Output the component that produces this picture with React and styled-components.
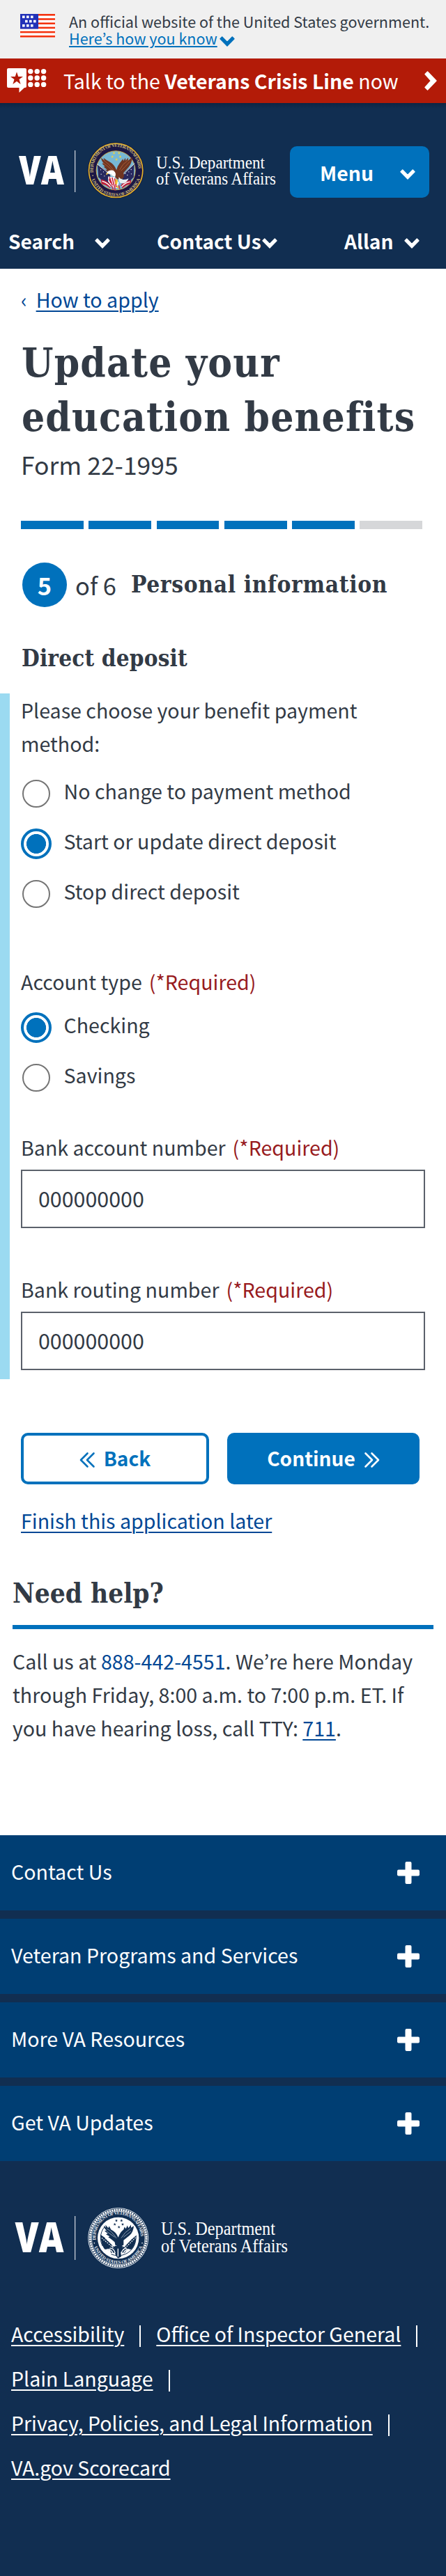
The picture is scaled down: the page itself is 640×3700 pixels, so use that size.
import React, { useState } from "react";
import styled, { createGlobalStyle, css } from "styled-components";

const color = {
  ink: "#323a45",
  navy: "#112e51",
  footerBlue: "#003e73",
  primary: "#0071bc",
  link: "#004795",
  red: "#b31b08",
  required: "#981b1e",
  hint: "#9bdaf1",
};

const sans = `"Noto Sans CJK KR", "Noto Sans CJK JP", "Noto Sans", sans-serif`;
const slab = `"DejaVu Serif Condensed", "DejaVu Serif", serif`;

const GlobalStyle = createGlobalStyle`
  *, *::before, *::after { box-sizing: border-box; }
  body {
    margin: 0;
    background: #fff;
    color: ${color.ink};
    font-family: ${sans};
    font-size: 28.6px;
    line-height: 48px;
  }
  h1, h2, h3, p, ul, fieldset { margin: 0; padding: 0; border: 0; min-width: 0; }
  button, input { font-family: inherit; color: inherit; }
`;

const Page = styled.div`
  width: 640px;
  height: 3700px;
  overflow: hidden;
  display: flex;
  flex-direction: column;
`;

const underline = css`
  text-decoration: underline;
  text-decoration-thickness: 2px;
  text-underline-offset: 4px;
`;

/* ---------- Icons ---------- */

const Icon = styled.svg`
  display: block;
  flex: none;
  overflow: visible;
`;

const ChevronDown = ({ width = 22, fill = "#fff" }) => (
  <Icon width={width} height={(width * 15) / 22} viewBox="0 0 22 15">
    <path
      d="M1 3.7 3.7 1 11 8.4 18.3 1 21 3.7 11 14Z"
      fill={fill}
      stroke={fill}
      strokeWidth="1.4"
      strokeLinejoin="round"
    />
  </Icon>
);

const ChevronRight = () => (
  <Icon width="18" height="28" viewBox="0 0 18 28">
    <path
      d="M1 4.500 4.500 1 17 14 4.500 27 1 23.500 9.500 14Z"
      fill="#fff"
      stroke="#fff"
      strokeWidth="1.4"
      strokeLinejoin="round"
    />
  </Icon>
);

const DoubleAngle = ({ back }) => (
  <Icon width="22" height="22" viewBox="0 0 22 22">
    <path
      d={back ? "M11.500 1.500 2 11l9.500 9.500M20.500 1.500 11 11l9.500 9.500" : "M1.500 1.500 11 11l-9.500 9.500M10.500 1.500 20 11l-9.500 9.500"}
      fill="none"
      stroke="currentColor"
      strokeWidth="2.600"
      strokeLinecap="round"
      strokeLinejoin="round"
    />
  </Icon>
);

const Plus = () => (
  <Icon width="32" height="32" viewBox="0 0 32 32" fill="#fff">
    <rect x="11.500" y="0" width="9" height="32" rx="2" />
    <rect x="0" y="11.500" width="32" height="9" rx="2" />
  </Icon>
);

const Flag = () => (
  <Icon width="50" height="34" viewBox="0 0 50 34">
    <rect width="50" height="34" fill="#fff" />
    {[0, 6.2, 12.4, 18.6, 24.8, 31].map((y) => (
      <rect key={y} y={y} width="50" height="2.600" fill="#f4330f" />
    ))}
    <rect width="26" height="21.500" fill="#2131b8" />
    {[
      [3, 2.5], [9, 2.5], [15, 2.5],
      [7, 8.8], [13, 8.8], [19, 8.8],
      [3, 15], [9, 15], [15, 15],
    ].map(([x, y]) => (
      <rect key={`${x}-${y}`} x={x} y={y} width="3.600" height="3.600" fill="#fff" />
    ))}
  </Icon>
);

const CrisisIcon = () => (
  <Icon width="57" height="36" viewBox="0 0 57 36" fill="#fff">
    <path d="M2 0H26a2 2 0 0 1 2 2V26a2 2 0 0 1-2 2H25L17.500 35V28H2a2 2 0 0 1-2-2V2a2 2 0 0 1 2-2Z" />
    <path
      d="M14 5.300 16.200 12H23L17.500 16 19.600 23 14 18.700 8.400 23 10.500 16 5 12H11.800Z"
      fill={color.red}
    />
    {[33.8, 43.2, 52.6].map((x) =>
      [4.6, 14, 23.4].map((y) => <circle key={`${x}-${y}`} cx={x} cy={y} r="3.700" />)
    )}
  </Icon>
);

/* ---------- Logo ---------- */

const Stars = ({ fill }) =>
  [[129, 73], [151, 73], [122, 89], [156, 89], [140, 101]].map(([x, y]) => (
    <path
      key={`${x}-${y}`}
      transform={`translate(${x} ${y})`}
      d="M0-6.500 1.600-2H6.200L2.500.900 3.900 5.500 0 2.800-3.900 5.500-2.500.900-6.200-2H-1.600Z"
      fill={fill}
    />
  ));

const SealLettering = ({ id, fill, size }) => (
  <g fill={fill} fontFamily="Liberation Serif, serif" fontWeight="700" fontSize={size}>
    <path id={`${id}-top`} d="M41 157A97 97 0 1 1 233 157" fill="none" />
    <path id={`${id}-bottom`} d="M31 179A110 110 0 0 0 243 179" fill="none" />
    <text>
      <textPath href={`#${id}-top`} textLength="316">DEPARTMENT OF VETERANS AFFAIRS</textPath>
    </text>
    <text>
      <textPath href={`#${id}-bottom`} startOffset="8" textLength="272">UNITED STATES OF AMERICA</textPath>
    </text>
  </g>
);

const ColorSeal = () => (
  <g transform="translate(120.500 5.500) scale(.3333)">
    <circle cx="137" cy="148" r="121" fill="#17143e" />
    <circle cx="137" cy="148" r="116" fill="#1b1746" stroke="#e3b62b" strokeWidth="5" />
    <circle cx="137" cy="148" r="84" fill="#77b8d6" stroke="#c9a548" strokeWidth="3" />
    <SealLettering id="color-seal" fill="#cdbd7d" size="20" />
    <Stars fill="#f4d33c" />
    <path d="M58 122 112 158 116 206 82 196 62 176Z" fill="#28295f" />
    <path d="M216 120 172 160 160 206 194 198 214 176Z" fill="#28295f" />
    <path d="M56 120 122 172M218 118 156 178" stroke="#e8e3d5" strokeWidth="3" />
    <g fill="#fff">
      {[[72, 145], [84, 154], [74, 164], [88, 172], [99, 162], [203, 144], [193, 154], [204, 163], [187, 168], [178, 161]].map(([x, y]) => (
        <circle key={`${x}-${y}`} cx={x} cy={y} r="2" />
      ))}
    </g>
    <path d="M72 186Q98 190 118 212L112 224Q92 208 76 206Z" fill="#bd2038" />
    <path d="M204 190Q180 190 158 212L166 224Q184 208 200 206Z" fill="#bd2038" />
    <path d="M78 194Q100 200 114 218M198 197Q178 200 162 218" stroke="#fff" strokeWidth="4" fill="none" />
    <path
      d="M74 94Q82 100 88 105L84 94Q98 105 112 112Q130 122 140 146Q144 128 154 116L168 98 170 107 178 94 180 106 190 93 190 106 208 90Q206 118 192 134Q180 148 170 158Q176 176 166 184L144 186 128 170Q108 154 94 146L99 144 84 132 91 131 77 118 86 118Q75 108 74 94Z"
      fill="#6f3521"
    />
    <path d="M85 104Q108 119 128 147M82 115Q103 128 125 151M190 104Q166 119 153 146M197 110Q176 134 159 150" stroke="#a55c35" strokeWidth="3" fill="none" />
    <path d="M126 148Q108 143 98 157L96 165 105 162Q117 160 122 170L134 176Q142 160 126 148Z" fill="#fff" />
    <path d="M98 157 95 168 105 162Z" fill="#f2c230" />
    <path d="M104 174 132 177 150 200 143 224 124 220 104 196Z" fill="#fff" />
    <path d="M110 177 122 212M121 178 131 218M132 182 139 220M108 186 116 202" stroke="#c9203a" strokeWidth="5" />
    <path d="M150 176Q166 196 192 182Q184 206 160 204 148 198 150 176Z" fill="#e8f0f3" />
    <path d="M136 184 146 190 142 210 134 204ZM143 210 151 228 139 220Z" fill="#efc233" />
    <path d="M120 214 126 232M132 217 134 234M150 212 154 228" stroke="#d1324a" strokeWidth="5" />
    <circle cx="38" cy="170" r="2.500" fill="#cdbd7d" />
    <circle cx="237" cy="170" r="2.500" fill="#cdbd7d" />
  </g>
);

const MonoSeal = () => (
  <g transform="translate(124 5.200) scale(.3333)">
    <circle cx="137" cy="148" r="129" fill="none" stroke="#dfe5ec" strokeWidth="3" />
    <circle cx="137" cy="148" r="121" fill="none" stroke="#fff" strokeWidth="9" strokeDasharray="7 3" />
    <circle cx="137" cy="148" r="115" fill="none" stroke="#fff" strokeWidth="2" />
    <circle cx="137" cy="148" r="89" fill="#fff" />
    <SealLettering id="mono-seal" fill="#e6ebf1" size="20" />
    <Stars fill={color.navy} />
    <circle cx="137" cy="148" r="76" fill="none" stroke={color.navy} strokeWidth="3" strokeDasharray="150 52 90 180" />
    <g fill={color.navy}>
      <path d="M76 94 84 104 82 91 94 105 98 97 106 112Q128 122 137 146Q144 124 160 112L164 100 170 108 176 94 181 105 192 91 192 104 204 96Q202 122 186 137L160 158 160 178 142 188 124 178 122 166Q104 150 94 145L100 141 84 132 92 129 78 117 87 116Q76 108 76 94Z" />
      <path d="M60 133 78 146 112 180 98 200 78 196Q64 180 60 133ZM216 136 194 154 166 184 174 200 196 196Q211 178 216 136Z" />
      <path d="M98 190 124 182 150 182 178 192 164 214 148 208 150 228 136 236 128 226 122 212 106 212Z" />
    </g>
    <path d="M66 148 120 194M82 150 122 184M212 146 158 200M198 148 154 190" stroke="#fff" strokeWidth="4" strokeDasharray="5 5" />
    <path d="M86 198Q104 192 114 212M100 192Q118 190 124 214M186 198Q170 192 160 212M174 192Q158 190 150 214M136 194V228" stroke="#fff" strokeWidth="4" fill="none" />
    <path d="M88 108Q112 121 129 149M86 119 122 144M190 107Q164 123 150 148M192 119 160 144" stroke="#8799ae" strokeWidth="3" fill="none" />
    <circle cx="34" cy="170" r="2.500" fill="#fff" />
    <circle cx="240" cy="170" r="2.500" fill="#fff" />
  </g>
);

const HeaderLogo = () => (
  <Icon width="410" height="110" viewBox="0 0 410 110" fill="#fff">
    <text x="27" y="74.500" fontFamily="Open Sans" fontWeight="800" fontSize="56" textLength="65" lengthAdjust="spacingAndGlyphs">VA</text>
    <rect x="107" y="26" width="1.300" height="60" fill="#c5ccd6" />
    <ColorSeal />
    <g fontFamily="Liberation Serif, serif" fontSize="25">
      <text x="224" y="52" textLength="156" lengthAdjust="spacingAndGlyphs">U.S. Department</text>
      <text x="224" y="74.500" textLength="172" lengthAdjust="spacingAndGlyphs">of Veterans Affairs</text>
    </g>
  </Icon>
);

const FooterLogo = () => (
  <Icon width="430" height="110" viewBox="0 0 430 110" fill="#fff">
    <text x="21.500" y="75" fontFamily="Open Sans" fontWeight="800" fontSize="60" textLength="70" lengthAdjust="spacingAndGlyphs">VA</text>
    <rect x="107" y="23" width="1.300" height="63" fill="#c5ccd6" />
    <MonoSeal />
    <g fontFamily="Liberation Serif, serif" fontSize="26.500">
      <text x="231" y="50" textLength="164" lengthAdjust="spacingAndGlyphs">U.S. Department</text>
      <text x="231" y="74.500" textLength="182" lengthAdjust="spacingAndGlyphs">of Veterans Affairs</text>
    </g>
  </Icon>
);

/* ---------- Banners ---------- */

const GovBanner = styled.div`
  display: flex;
  flex: none;
  gap: 20px;
  height: 84px;
  padding: 20px 0 0 29px;
  background: #f0f0f0;
  font-size: 21.55px;
  line-height: 24px;
  white-space: nowrap;
`;

const GovText = styled.div`
  margin-top: -1px;
`;

const GovToggle = styled.a`
  display: flex;
  align-items: center;
  gap: 3px;
  color: ${color.primary};
  span { ${underline} text-underline-offset: 2px; }
  svg { margin-top: 8px; }
`;

const CrisisBar = styled.div`
  display: flex;
  flex: none;
  align-items: center;
  height: 64px;
  padding: 0 13px 0 10px;
  background: ${color.red};
  color: #fff;
  font-size: 28.5px;
  white-space: nowrap;
`;

const CrisisText = styled.div`
  flex: 1;
  padding: 0 0 1px 24px;
  strong { font-weight: 700; }
`;

/* ---------- Header ---------- */

const Header = styled.header`
  flex: none;
  height: 238px;
  padding-top: 42px;
  background: linear-gradient(#0d2544, ${color.navy} 8px);
  color: #fff;
`;

const LogoRow = styled.div`
  display: flex;
  gap: 6px;
  height: 110px;
`;

const MenuButton = styled.button`
  display: flex;
  align-items: center;
  justify-content: space-between;
  width: 200px;
  height: 74px;
  margin-top: 20px;
  padding: 0 20px 0 43px;
  border: 0;
  border-radius: 10px;
  background: ${color.primary};
  color: #fff;
  font-size: 28.4px;
  font-weight: 700;
  svg { margin-top: 6px; }
`;

const HeaderNav = styled.nav`
  display: grid;
  grid-template-columns: 213px 269px 1fr;
  margin-top: 22px;
  padding-left: 12px;
`;

const NavItem = styled.a`
  display: flex;
  align-items: center;
  gap: ${(p) => p.$gap}px;
  font-size: 28.2px;
  font-weight: 700;
  white-space: nowrap;
  svg { margin-top: 6px; }
`;

/* ---------- Form ---------- */

const Content = styled.main`
  display: flex;
  flex-direction: column;
  flex: none;
`;

const Breadcrumb = styled.div`
  display: flex;
  gap: 13px;
  margin: 28px 0 0 30px;
  color: ${color.link};
  line-height: 32px;
  a { ${underline} }
`;

const Title = styled.h1`
  margin: 36px 0 0 31px;
  font: 700 58px/78px ${slab};
  letter-spacing: 1.15px;
  white-space: nowrap;
`;

const Subtitle = styled.p`
  margin: 3px 0 0 30px;
  font-size: 35.5px;
  line-height: 52px;
`;

const Progress = styled.div`
  display: grid;
  grid-template-columns: repeat(6, 1fr);
  gap: 7.500px;
  width: 576px;
  margin: 55px 0 0 30px;
`;

const Segment = styled.div`
  height: 12px;
  background: ${(p) => (p.$done ? color.primary : "#d6d7d9")};
`;

const StepRow = styled.div`
  display: flex;
  align-items: center;
  height: 64px;
  margin: 48px 0 0 32px;
  white-space: nowrap;
`;

const StepNumber = styled.span`
  display: flex;
  align-items: center;
  justify-content: center;
  width: 64px;
  height: 64px;
  border-radius: 50%;
  background: ${color.primary};
  color: #fff;
  font-size: 34.5px;
  font-weight: 700;
`;

const StepOf = styled.span`
  margin-left: 12px;
  font-size: 34.5px;
`;

const StepTitle = styled.h2`
  margin-left: 21px;
  font: 700 33.2px/48px ${slab};
  letter-spacing: 0.65px;
`;

const SectionTitle = styled.h3`
  margin: 50px 0 0 31px;
  font: 700 33px/48px ${slab};
  letter-spacing: 0.17px;
`;

const FormBlock = styled.section`
  display: flex;
  flex-direction: column;
  margin-top: 26px;
  padding: 0 30px 13px 16px;
  border-left: 14px solid ${color.hint};
`;

const Legend = styled.div`
  margin-top: ${(p) => p.$top || 0}px;
  margin-bottom: ${(p) => p.$bottom || 0}px;
`;

const Required = styled.span`
  margin-left: 10px;
  color: ${color.required};
`;

const RadioRow = styled.label`
  display: flex;
  align-items: center;
  gap: 17.500px;
  height: 72px;
`;

const RadioText = styled.span`
  padding-bottom: 8px;
`;

const Radio = styled.input`
  appearance: none;
  flex: none;
  width: 40px;
  height: 40px;
  margin: 0 2px;
  border: 2px solid #757575;
  border-radius: 50%;
  background: #fff;
  &:checked {
    width: 44px;
    height: 44px;
    margin: 0;
    border: 4px solid ${color.primary};
    background: radial-gradient(circle, ${color.primary} 13.700px, #fff 14.300px);
  }
`;

const TextInput = styled.input`
  width: 580px;
  height: 84px;
  padding: 0 0 2px 23px;
  border: 2px solid #5b616b;
  border-radius: 0;
  background: #fff;
  font-size: 30.4px;
`;

const ButtonRow = styled.div`
  display: flex;
  gap: 26px;
  margin: 77px 0 0 30px;
`;

const ActionButton = styled.button`
  display: flex;
  align-items: center;
  justify-content: center;
  gap: 13px;
  width: ${(p) => (p.$primary ? 276 : 270)}px;
  height: 74px;
  padding: 0;
  border: 4px solid ${color.primary};
  border-radius: 10px;
  background: ${(p) => (p.$primary ? color.primary : "#fff")};
  color: ${(p) => (p.$primary ? "#fff" : color.primary)};
  font-size: 28.1px;
  font-weight: 700;
  svg { margin-top: 4px; }
  span { padding-bottom: 3px; }
`;

const SaveLink = styled.a`
  align-self: flex-start;
  margin: 28px 0 0 30px;
  color: ${color.link};
  ${underline}
`;

const HelpTitle = styled.h2`
  margin: 53px 18px 0;
  padding-bottom: 17px;
  border-bottom: 6px solid ${color.primary};
  font: 700 38.500px/56px ${slab};
`;

const HelpText = styled.p`
  margin: 22px 18px 0;
  white-space: nowrap;
`;

const Phone = styled.a`
  color: ${color.link};
  ${(p) => p.$underlined && underline}
`;

/* ---------- Footer ---------- */

const Footer = styled.footer`
  flex: 1;
  margin-top: 130px;
  background: ${color.navy};
  color: #fff;
`;

const Accordion = styled.div`
  display: flex;
  flex-direction: column;
  gap: 12px;
  margin-bottom: 56px;
`;

const AccordionRow = styled.div`
  display: flex;
  align-items: center;
  justify-content: space-between;
  height: 108px;
  padding: 0 38px 0 16px;
  background: ${color.footerBlue};
  span { padding-bottom: 4px; }
`;

const FooterLinks = styled.ul`
  display: flex;
  flex-wrap: wrap;
  margin-top: 50px;
  padding-left: 16px;
  list-style: none;
  font-size: 28.500px;
  line-height: 64px;
`;

const FooterLink = styled.li`
  display: flex;
  align-items: center;
  margin-right: 22px;
  a { ${underline} }
  &:not(:last-child)::after {
    content: "";
    width: 2px;
    height: 31px;
    margin: 7px 0 0 22px;
    background: #fff;
  }
`;

const paymentMethods = [
  "No change to payment method",
  "Start or update direct deposit",
  "Stop direct deposit",
];
const accountTypes = ["Checking", "Savings"];

const RadioGroup = ({ name, options, value, onChange }) => (
  <div>
    {options.map((option) => (
      <RadioRow key={option}>
        <Radio type="radio" name={name} checked={value === option} onChange={() => onChange(option)} />
        <RadioText>{option}</RadioText>
      </RadioRow>
    ))}
  </div>
);

export default function App() {
  const [method, setMethod] = useState(paymentMethods[1]);
  const [account, setAccount] = useState(accountTypes[0]);

  return (
    <Page>
      <GlobalStyle />
      <GovBanner>
        <Flag />
        <GovText>
          An official website of the United States government.
          <GovToggle>
            <span>Here’s how you know</span>
            <ChevronDown fill={color.primary} />
          </GovToggle>
        </GovText>
      </GovBanner>
      <CrisisBar>
        <CrisisIcon />
        <CrisisText>
          Talk to the <strong>Veterans Crisis Line</strong> now
        </CrisisText>
        <ChevronRight />
      </CrisisBar>
      <Header>
        <LogoRow>
          <HeaderLogo />
          <MenuButton>
            Menu
            <ChevronDown />
          </MenuButton>
        </LogoRow>
        <HeaderNav>
          <NavItem $gap={29}>Search <ChevronDown /></NavItem>
          <NavItem $gap={1}>Contact Us <ChevronDown /></NavItem>
          <NavItem $gap={15}>Allan <ChevronDown /></NavItem>
        </HeaderNav>
      </Header>

      <Content>
        <Breadcrumb>
          <span>‹</span>
          <a>How to apply</a>
        </Breadcrumb>
        <Title>
          Update your
          <br />
          education benefits
        </Title>
        <Subtitle>Form 22-1995</Subtitle>
        <Progress>
          {[1, 2, 3, 4, 5, 6].map((step) => (
            <Segment key={step} $done={step <= 5} />
          ))}
        </Progress>
        <StepRow>
          <StepNumber>5</StepNumber>
          <StepOf>of 6</StepOf>
          <StepTitle>Personal information</StepTitle>
        </StepRow>
        <SectionTitle>Direct deposit</SectionTitle>

        <FormBlock>
          <Legend $bottom={12}>
            Please choose your benefit payment
            <br />
            method:
          </Legend>
          <RadioGroup name="method" options={paymentMethods} value={method} onChange={setMethod} />
          <Legend $top={66} $bottom={6}>
            Account type<Required>(*Required)</Required>
          </Legend>
          <RadioGroup name="account" options={accountTypes} value={account} onChange={setAccount} />
          <Legend $top={40} $bottom={8}>
            Bank account number<Required>(*Required)</Required>
          </Legend>
          <TextInput defaultValue="000000000" />
          <Legend $top={64} $bottom={8}>
            Bank routing number<Required>(*Required)</Required>
          </Legend>
          <TextInput defaultValue="000000000" />
        </FormBlock>

        <ButtonRow>
          <ActionButton>
            <DoubleAngle back />
            <span>Back</span>
          </ActionButton>
          <ActionButton $primary>
            <span>Continue</span>
            <DoubleAngle />
          </ActionButton>
        </ButtonRow>
        <SaveLink>Finish this application later</SaveLink>

        <HelpTitle>Need help?</HelpTitle>
        <HelpText>
          Call us at <Phone>888-442-4551</Phone>. We’re here Monday
          <br />
          through Friday, 8:00 a.m. to 7:00 p.m. ET. If
          <br />
          you have hearing loss, call TTY: <Phone $underlined>711</Phone>.
        </HelpText>
      </Content>

      <Footer>
        <Accordion>
          {["Contact Us", "Veteran Programs and Services", "More VA Resources", "Get VA Updates"].map((label) => (
            <AccordionRow key={label}>
              <span>{label}</span>
              <Plus />
            </AccordionRow>
          ))}
        </Accordion>
        <FooterLogo />
        <FooterLinks>
          {[
            "Accessibility",
            "Office of Inspector General",
            "Plain Language",
            "Privacy, Policies, and Legal Information",
            "VA.gov Scorecard",
          ].map((label) => (
            <FooterLink key={label}>
              <a>{label}</a>
            </FooterLink>
          ))}
        </FooterLinks>
      </Footer>
    </Page>
  );
}
